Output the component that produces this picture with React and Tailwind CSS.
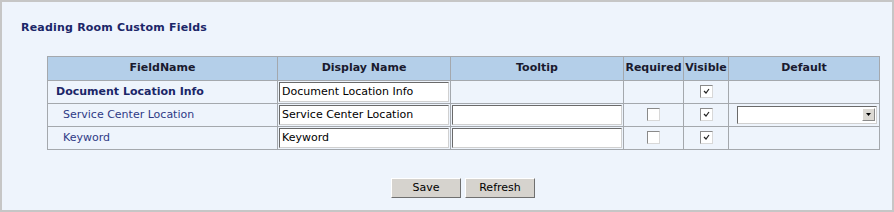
import React from 'react';

const rows = [
  { name: 'Document Location Info', display: 'Document Location Info', group: true },
  { name: 'Service Center Location', display: 'Service Center Location', select: true },
  { name: 'Keyword', display: 'Keyword' },
];

function Check({ checked }) {
  return (
    <span className="inline-flex w-[13px] h-[13px] items-center justify-center bg-white border border-t-[#8a8a8a] border-l-[#8a8a8a] border-b-[#d8d8d8] border-r-[#d8d8d8] align-middle">
      {checked && (
        <svg width="9" height="9" viewBox="0 0 9 9">
          <path d="M2 4 L4 6 L7 2" fill="none" stroke="#222" strokeWidth="1.2" />
        </svg>
      )}
    </span>
  );
}

function TextBox({ value }) {
  return (
    <div className="h-[20px] w-full bg-white border border-t-[#6a6a6a] border-l-[#6a6a6a] border-b-[#d0d0d0] border-r-[#d0d0d0] px-[2px] leading-[18px] text-black truncate">
      {value}
    </div>
  );
}

export default function App() {
  const cell = 'border border-[#a4a8ad] p-0';
  return (
    <div className="w-[894px] h-[212px] bg-[#eef4fc] border-2 border-[#c6c6c6] font-['DejaVu_Sans',Verdana,sans-serif] text-[11px] text-[#27307a]">
      <div className="pl-[19px] pt-[19px] font-bold text-[#1b2668] leading-[13px] tracking-[0.2px]">Reading Room Custom Fields</div>
      <div className="ml-[45px] mt-[22px] w-[832px]">
        <table className="w-[832px] table-fixed border-collapse">
          <colgroup>
            <col className="w-[230px]" />
            <col className="w-[173px]" />
            <col className="w-[173px]" />
            <col className="w-[60px]" />
            <col className="w-[45px]" />
            <col className="w-[151px]" />
          </colgroup>
          <thead>
            <tr className="h-[24px] bg-[#b4cfe9] text-[#1a1a2e] font-bold">
              <th className={cell}>FieldName</th>
              <th className={cell}>Display Name</th>
              <th className={cell}>Tooltip</th>
              <th className={cell}>Required</th>
              <th className={cell}>Visible</th>
              <th className={cell}>Default</th>
            </tr>
          </thead>
          <tbody>
            {rows.map((r) => (
              <tr key={r.name} className="h-[23px]">
                <td className={`${cell} ${r.group ? 'pl-[8px] font-bold text-[#1b2668]' : 'pl-[15px] text-[#2f3a86]'}`}>{r.name}</td>
                <td className={`${cell} px-[1px]`}>
                  <TextBox value={r.display} />
                </td>
                <td className={`${cell} px-[1px]`}>{!r.group && <TextBox value="" />}</td>
                <td className={`${cell} text-center`}>{!r.group && <Check />}</td>
                <td className={`${cell} text-center`}>
                  <Check checked />
                </td>
                <td className={`${cell} pl-[8px] pr-[2px]`}>
                  {r.select && (
                    <div className="h-[18px] flex bg-white border border-t-[#6a6a6a] border-l-[#6a6a6a] border-b-[#d0d0d0] border-r-[#d0d0d0]">
                      <div className="flex-1" />
                      <div className="w-[13px] h-[13px] mt-[1px] mr-[1px] bg-[#dcd9d3] border border-t-white border-l-white border-b-[#8a8a8a] border-r-[#8a8a8a] flex items-center justify-center">
                        <svg width="5" height="3" viewBox="0 0 5 3">
                          <path d="M0 0 H5 L2.5 3 Z" fill="#000" />
                        </svg>
                      </div>
                    </div>
                  )}
                </td>
              </tr>
            ))}
          </tbody>
        </table>
        <div className="flex justify-center gap-[4px] mt-[28px] text-black">
          <button className="w-[70px] h-[20px] bg-[#d6d3ce] border border-t-white border-l-white border-b-[#6f6f6f] border-r-[#6f6f6f] leading-[18px]">Save</button>
          <button className="w-[70px] h-[20px] bg-[#d6d3ce] border border-t-white border-l-white border-b-[#6f6f6f] border-r-[#6f6f6f] leading-[18px]">Refresh</button>
        </div>
      </div>
    </div>
  );
}
